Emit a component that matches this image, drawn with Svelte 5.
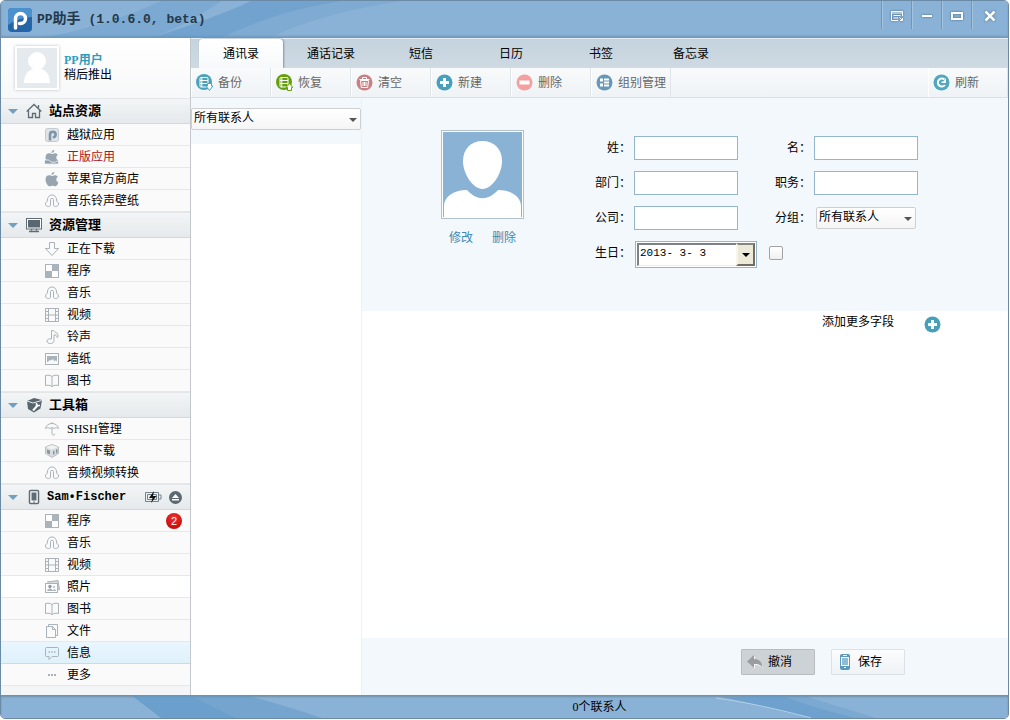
<script lang="ts">
  type Item = { icon: string; label: string; badge?: number; red?: boolean };
  type Group = { icon: string; title: string; device?: boolean; items: Item[] };

  const groups: Group[] = [
    {
      icon: 'home',
      title: '站点资源',
      items: [
        { icon: 'pp', label: '越狱应用' },
        { icon: 'appleHand', label: '正版应用', red: true },
        { icon: 'apple', label: '苹果官方商店' },
        { icon: 'music', label: '音乐铃声壁纸' }
      ]
    },
    {
      icon: 'monitor',
      title: '资源管理',
      items: [
        { icon: 'download', label: '正在下载' },
        { icon: 'apps', label: '程序' },
        { icon: 'music', label: '音乐' },
        { icon: 'video', label: '视频' },
        { icon: 'note', label: '铃声' },
        { icon: 'wallpaper', label: '墙纸' },
        { icon: 'book', label: '图书' }
      ]
    },
    {
      icon: 'tools',
      title: '工具箱',
      items: [
        { icon: 'umbrella', label: 'SHSH管理' },
        { icon: 'firmware', label: '固件下载' },
        { icon: 'music', label: '音频视频转换' }
      ]
    },
    {
      icon: 'phone',
      title: 'Sam•Fischer',
      device: true,
      items: [
        { icon: 'apps', label: '程序', badge: 2 },
        { icon: 'music', label: '音乐' },
        { icon: 'video', label: '视频' },
        { icon: 'photo', label: '照片' },
        { icon: 'book', label: '图书' },
        { icon: 'files', label: '文件' },
        { icon: 'message', label: '信息' },
        { icon: 'more', label: '更多' }
      ]
    }
  ];

  const tabs = ['通讯录', '通话记录', '短信', '日历', '书签', '备忘录'];

  const tools = [
    { icon: 'backup', label: '备份' },
    { icon: 'restore', label: '恢复' },
    { icon: 'clear', label: '清空' },
    { icon: 'add', label: '新建' },
    { icon: 'remove', label: '删除' },
    { icon: 'groups', label: '组别管理' }
  ];

  let activeTab = $state('通讯录');
  let activeItem = $state('信息');
  let contactGroup = $state('所有联系人');
  let birthday = $state('2013- 3- 3');
  let useBirthday = $state(false);
  let closed = $state<Record<string, boolean>>({});

  function toggle(title: string) {
    closed[title] = !closed[title];
  }

  function select(e: MouseEvent, label: string) {
    e.preventDefault();
    activeItem = label;
  }
</script>

{#snippet sideIcon(name: string)}
  <svg class="side-icon" viewBox="0 0 16 16" fill="none" stroke="#a9b3b9" aria-hidden="true">
    {#if name === 'pp'}
      <rect x="1.5" y="1.5" width="13" height="13" rx="2" fill="#dfe4e8" stroke="#c3cbd1" />
      <path d="M6 13.5V7.5a2.8 2.8 0 1 1 2.8 2.8" stroke="#7e95a8" stroke-width="2.6" />
    {:else if name === 'apple' || name === 'appleHand'}
      <path
        d="M10.3.8c.1 1.700-1.100 3.100-2.800 3.200C7.400 2.400 8.700 1.100 10.300.8zM8 5c.8 0 1.600-.8 3-.8 1.200 0 2.200.6 2.900 1.500-2.400 1.500-2 4.700.5 5.700-.7 1.900-1.900 3.900-3.300 3.900-1 0-1.500-.6-2.700-.6s-1.800.6-2.700.6C3.800 15.300 1.500 11.500 1.500 8.500c0-2.700 1.700-4.200 3.500-4.200C6.300 4.300 7.200 5 8 5z"
        fill="#97a5b1"
        stroke="none"
      />
      {#if name === 'appleHand'}
        <path d="M.5 11h4l3 2.200h4l3-2V15H.5z" fill="#8e9eab" stroke="#f9f9f9" stroke-width=".8" />
      {/if}
    {:else if name === 'music'}
      <path d="M6.500 6.500v5.500c0 1-.9 1.500-2 1.500-1.700 0-3-.9-3-2.500 0-1.200.8-2.200 1.800-2.600C3.300 4.500 5 2 8 2s4.700 2.500 4.700 6.400c1 .4 1.800 1.400 1.800 2.600 0 1.600-1.300 2.500-3 2.500-1.100 0-2-.5-2-1.500V6.500c0-1.500-3-1.500-3 0z" />
    {:else if name === 'download'}
      <path d="M5.500 1.500h5v6h4L8 14.500 1.500 7.500h4z" stroke-linejoin="round" />
    {:else if name === 'apps'}
      <rect x="1.500" y="1.500" width="13" height="13" fill="#fff" />
      <path d="M8 2h6v6H8zM2 8h6v6H2z" fill="#a9b3b9" stroke="none" />
    {:else if name === 'video'}
      <path d="M1.500 1.500h13v13h-13zM4.500 1.500v13M11.500 1.500v13M4.500 8h7M1.500 4.500h3M1.500 8h3M1.500 11.500h3M11.500 4.500h3M11.500 8h3M11.500 11.500h3" />
    {:else if name === 'note'}
      <path d="M7.500 10V1.500h2c.3 2 4.500 1.500 4.500 5 0 1.200-.6 2-1 2 .2-2-1.500-2.500-3-2.700v5.700c0 2-1.600 3-3.500 3s-3.500-.8-3.500-2.300C3 10.300 5.300 9.400 7.500 10z" />
    {:else if name === 'wallpaper'}
      <rect x="1.500" y="2.500" width="13" height="11" />
      <path d="M3 5h10v6l-1-2-1.500 1.500L9 8 7 9.500 5.500 9 4 11H3z" fill="#a9b3b9" stroke="none" />
    {:else if name === 'book'}
      <path d="M8 3.500C6.500 2 3.500 2 1.500 2.500v10c2-.5 5-.3 6.500 1 1.500-1.300 4.500-1.500 6.500-1v-10C12.500 2 9.500 2 8 3.500zM8 3.500v10" />
    {:else if name === 'umbrella'}
      <path d="M1.500 7.500C2 4.500 4.500 2.500 8 2.500s6 2 6.500 5c-1.500-1-3-1-4.300 0C9 6.500 7 6.500 5.800 7.500c-1.300-1-2.800-1-4.300 0zM8 1v1.500M8 7v5.500c0 2.200 2.700 2.200 2.700.2" />
    {:else if name === 'firmware'}
      <path d="M1.500 4L8 1.500 14.500 4v6.500L8 14.500 1.500 10.500z" fill="#dadddf" stroke="#b9bfc4" />
      <path d="M2 4.200L8 6.500l6-2.300L8 2z" fill="#f1f2f2" stroke="none" />
      <path d="M3 6.500l3 1v4L3 10zM9 8l1.500-.5v3.500L9 12zM12 6.500l1.500-.5v4L12 10.500z" fill="#8b969e" stroke="none" />
    {:else if name === 'photo'}
      <path d="M3 3l11-1.500 1.500 9L13 11" fill="#d5dadd" />
      <rect x="1.500" y="4.500" width="12" height="9" fill="#fff" />
      <circle cx="6" cy="7.500" r="1.700" fill="#8f9ba3" stroke="none" />
      <circle cx="10" cy="8" r="1.200" fill="#c3cacf" stroke="none" />
      <path d="M3 12c.3-3.500 5.700-3.500 6 0zM9 12c0-2.500 3-2.500 3 0z" fill="#a9b3b9" stroke="none" />
    {:else if name === 'files'}
      <path d="M4.500 3.500v-2h9v11h-2M2.500 3.500h6l3 3v8h-9zM8.500 3.500v3h3" />
    {:else if name === 'message'}
      <path d="M2.500 2.500h11q1 0 1 1v7q0 1-1 1H8L5 14.500v-3H2.500q-1 0-1-1v-7q0-1 1-1z" />
      <path d="M4.500 7h1.500M7.200 7h1.500M10 7h1.500" stroke-width="1.500" />
    {:else}
      <path d="M4 8h2M7 8h2M10 8h2" stroke-width="2" />
    {/if}
  </svg>
{/snippet}

{#snippet groupIcon(name: string)}
  <svg class="group-icon" viewBox="0 0 16 16" fill="none" stroke="#5f6c75" aria-hidden="true">
    {#if name === 'home'}
      <path d="M.7 8.500L8 1.500l7.300 7M2.500 7.500v7h4v-4h3v4h4v-7M12.500 2v3" stroke-width="1.300" />
    {:else if name === 'monitor'}
      <rect x=".5" y="1.500" width="15" height="10.500" fill="#fff" />
      <rect x="2" y="3" width="12" height="7.500" fill="#5a6770" stroke="none" />
      <path d="M5.500 12v1.500M10.500 12v1.500M3 14.500h10" stroke-width="1.500" />
    {:else if name === 'tools'}
      <path d="M1 4l7-3 8 2-1.500 8.500-6.500 4-6-3.500z" fill="#59656e" stroke="none" />
      <path d="M1 4l6 2 8.500-2.500" stroke="#e8ecee" />
      <path d="M7 13.500l5-5.500" stroke="#fff" stroke-width="2" />
      <path d="M10.500 6v2.500h3.500" stroke="#fff" stroke-width="1.500" />
    {:else}
      <rect x="3.500" y="1.500" width="9" height="13" rx="1" fill="#fff" stroke-width="1.500" />
      <rect x="5.500" y="3.500" width="5" height="8" fill="#5f6c75" stroke="none" />
      <path d="M7 13h2" />
    {/if}
  </svg>
{/snippet}

{#snippet toolIcon(name: string)}
  <svg class="tool-icon" viewBox="0 0 17 17" fill="none" stroke="#fff" aria-hidden="true">
    {#if name === 'backup' || name === 'restore'}
      {@const color = name === 'backup' ? '#4ba3bb' : '#64a00c'}
      <circle cx="8" cy="8" r="8" fill={color} stroke="none" />
      <rect x="4" y="3.500" width="8" height="9.500" rx="1" />
      <path d="M4 6.500h8M4 9.500h8M5.800 3.500v9.500" />
      {#if name === 'backup'}
        <path d="M11.500 9.500h4v2.500h1.300L13.500 16.500 10 12h1.500z" fill="#fff" stroke={color} />
      {:else}
        <path d="M11.500 16.500h4v-3h1.300L13.500 9.500 10 13.500h1.500z" fill="#fff" stroke={color} />
      {/if}
    {:else if name === 'clear'}
      <circle cx="8.500" cy="8.500" r="8" fill="#cb7f82" stroke="none" />
      <path d="M4.500 6.500h8l-.8 7H5.300zM3.500 5.500h10M6.500 5V3.500h4V5M7 8v4M8.500 8v4M10 8v4" />
    {:else if name === 'add'}
      <circle cx="8.500" cy="8.500" r="8" fill="#489fb9" stroke="none" />
      <path d="M8.500 4v9M4 8.500h9" stroke-width="3" />
    {:else if name === 'remove'}
      <circle cx="8.500" cy="8.500" r="8" fill="#f4a09f" stroke="none" />
      <path d="M3.500 8.500h10" stroke-width="4" />
    {:else if name === 'groups'}
      <circle cx="8.500" cy="8.500" r="8" fill="#6798b8" stroke="none" />
      <path d="M4 6h3M4 11h3" stroke-width="3" />
      <path d="M8 5.500h5M8 8.500h5M8 11.500h5" stroke-width="2" />
    {:else}
      <circle cx="8.500" cy="8.500" r="8" fill="#4fa8c0" stroke="none" />
      <path d="M12 11a4 4 0 1 1-.5-5.500" stroke-width="2" />
      <path d="M13 4v5H8.500V7.500h2z" fill="#fff" stroke="none" />
    {/if}
  </svg>
{/snippet}

{#snippet field(id: string, label: string)}
  <label for={id}>{label}：</label>
  <input {id} class="text-input" type="text" />
{/snippet}

<div class="window">
  <header class="titlebar">
    <svg class="streaks" width="420" height="37" viewBox="0 0 420 37" aria-hidden="true">
      <path d="M40 37C90 28 130 14 160 0h60C200 14 180 26 150 37z" fill="#5f98c8" opacity=".35" />
      <path d="M150 37C190 24 225 12 250 0h90C290 8 250 22 220 37z" fill="#5f98c8" opacity=".55" />
      <path d="M220 37C250 22 290 8 340 0h60C350 8 300 20 270 37z" fill="#5f98c8" opacity=".25" />
    </svg>
    <svg class="logo" viewBox="0 0 24 24" aria-hidden="true">
      <rect width="24" height="24" rx="4" fill="#2465a8" />
      <path d="M0 4q0-4 4-4h16q4 0 4 4v5Q12 9 0 17z" fill="#4b91cd" />
      <path d="M7.500 20V10.500a5 5 0 1 1 5 5h-1" fill="none" stroke="#fff" stroke-width="3.500" stroke-linecap="round" />
    </svg>
    <h1>PP<span>助手</span> (1.0.6.0, beta)</h1>
    <div class="window-buttons">
      <button aria-label="菜单">
        <svg viewBox="0 0 16 14"><path d="M9 11.500H2.500v-9h11V7M2 4h12M4.500 6.500h7M4.500 9h4.500M10.500 8.500l3 3M13.500 9v2.500H11" /></svg>
      </button>
      <button aria-label="最小化">
        <svg viewBox="0 0 16 14"><path d="M3 7h10" stroke-width="2" /></svg>
      </button>
      <button aria-label="最大化">
        <svg viewBox="0 0 16 14"><path d="M3 4h10v6H3z" stroke-width="2" /></svg>
      </button>
      <button class="close" aria-label="关闭">
        <svg viewBox="0 0 16 14"><path d="M3.500 2.500l9 9M12.500 2.500l-9 9" stroke-width="2.500" /></svg>
      </button>
    </div>
  </header>

  <div class="body">
    <aside>
      <div class="profile">
        <svg class="user-pic" viewBox="0 0 40 40" aria-hidden="true">
          <rect width="40" height="40" fill="#e5eaee" />
          <circle cx="20" cy="13" r="9" fill="#fff" />
          <path d="M7 35c0-8 4-13 9-14h8c5 1 9 6 9 14z" fill="#fff" />
        </svg>
        <div>
          <strong>PP用户</strong>
          <span>稍后推出</span>
        </div>
      </div>

      <nav>
        {#each groups as group}
          <div class="group-head">
            <button class="group-toggle" onclick={() => toggle(group.title)}>
              <span class="triangle"></span>
              {@render groupIcon(group.icon)}
              <span class="group-title" class:device={group.device}>{group.title}</span>
            </button>
            {#if group.device}
              <svg class="battery" viewBox="0 0 17 12" fill="none" stroke="#76828a" aria-hidden="true">
                <path d="M.5 1.500h13v9H.5zM14 4h2v4h-2" />
                <path d="M2.500 3.500h9v5h-9z" />
                <path d="M9 0L4 7h3.500L6 12l5.500-7H8z" fill="#111" stroke="none" />
              </svg>
              <button class="eject" aria-label="弹出">
                <svg viewBox="0 0 13 13">
                  <circle cx="6.500" cy="6.500" r="6.500" fill="#5c6971" />
                  <path d="M6.500 3l3.500 4H3zM3 8h7v1.500H3z" fill="#fff" />
                </svg>
              </button>
            {/if}
          </div>
          {#if !closed[group.title]}
            <ul>
              {#each group.items as item}
                <li>
                  <a
                    href="#top"
                    class:active={item.label === activeItem}
                    class:hovered={item.icon === 'photo'}
                    class:red={item.red}
                    onclick={(e) => select(e, item.label)}
                  >
                    {@render sideIcon(item.icon)}
                    <span>{item.label}</span>
                    {#if item.badge}<b class="badge">{item.badge}</b>{/if}
                  </a>
                </li>
              {/each}
            </ul>
          {/if}
        {/each}
      </nav>
    </aside>

    <main>
      <div class="tabs" role="tablist">
        {#each tabs as tab}
          <button role="tab" aria-selected={tab === activeTab} class:active={tab === activeTab} onclick={() => (activeTab = tab)}>
            {tab}
          </button>
        {/each}
      </div>

      <div class="toolbar">
        {#each tools as tool}
          <button>{@render toolIcon(tool.icon)}{tool.label}</button>
        {/each}
        <button class="refresh">{@render toolIcon('refresh')}刷新</button>
      </div>

      <div class="content">
        <section class="contacts">
          <div class="select">
            <select aria-label="联系人分组">
              <option>所有联系人</option>
            </select>
          </div>
          <div class="contact-list"></div>
        </section>

        <section class="detail">
          <div class="card">
            <div class="avatar-box">
              <svg class="avatar" viewBox="0 0 79 85" aria-hidden="true">
                <rect width="79" height="85" fill="#8ab2d5" />
                <path d="M39.500 9C51 9 59 17 59 29c0 13-10 28-19.500 28S20 42 20 29C20 17 28 9 39.500 9z" fill="#fff" />
                <path d="M1 85V74c0-9 9-16 23-16 10 11 21 11 31 0 14 0 23 7 23 16v11z" fill="#fff" />
              </svg>
              <div class="avatar-links">
                <a href="#edit">修改</a>
                <a href="#delete">删除</a>
              </div>
            </div>

            <form class="fields">
              {@render field('last-name', '姓')}
              {@render field('first-name', '名')}
              {@render field('department', '部门')}
              {@render field('job', '职务')}
              {@render field('company', '公司')}
              <label for="group">分组：</label>
              <div class="select group-select">
                <select id="group" bind:value={contactGroup}>
                  <option>所有联系人</option>
                </select>
              </div>
              <label for="birthday">生日：</label>
              <div class="birthday">
                <div class="date-box">
                  <input id="birthday" type="text" bind:value={birthday} />
                  <button type="button" aria-label="选择日期"><span></span></button>
                </div>
                <input type="checkbox" aria-label="生日" bind:checked={useBirthday} />
              </div>
            </form>
          </div>

          <div class="more-fields">
            <span>添加更多字段</span>
            <button aria-label="添加更多字段">{@render toolIcon('add')}</button>
          </div>

          <div class="actions">
            <button class="undo">
              <svg viewBox="0 0 16 16" aria-hidden="true">
                <path d="M8 15V11c4 0 6 1 8 4 0-6-3-9-8-9V2L1 8.500z" fill="#f4f5f6" />
                <path d="M7 14v-4c4 0 7 .5 8.500 4C15.500 8 12 5 7 5V1L0 7.500z" fill="#999da0" />
              </svg>
              撤消
            </button>
            <button>
              <svg viewBox="0 0 16 16" aria-hidden="true">
                <rect x="3" y="0" width="10" height="16" rx="2" fill="#5b98bf" />
                <rect x="4.500" y="3.500" width="7" height="8" fill="#8cbcd8" stroke="#fff" />
                <path d="M6 1.500h4M7 13.500h2" stroke="#fff" />
              </svg>
              保存
            </button>
          </div>
        </section>
      </div>
    </main>
  </div>

  <footer>
    <svg class="streaks" width="900" height="23" viewBox="0 0 900 23" aria-hidden="true">
      <path d="M130 0h60c15 8 30 16 45 23h-75z" fill="#5f98c8" opacity=".7" />
      <path d="M190 0h55c28 8 50 14 75 23h-85C220 16 205 8 190 0z" fill="#5f98c8" opacity=".5" />
      <path d="M780 0h20c20 6 45 14 75 23h-20C825 16 800 8 780 0z" fill="#5f98c8" opacity=".35" />
      <path d="M720 2c20 0 40-2 60-2 20 8 45 16 75 23h-45C780 16 750 8 720 2z" fill="#5f98c8" opacity=".65" />
      <path d="M715 3c30 4 65 12 95 20" fill="none" stroke="#b3d0e8" />
    </svg>
    <span>0个联系人</span>
  </footer>
</div>

<style>
  :global(body) {
    margin: 0;
    background: #fff;
    color: #000;
    font: 12px/16px 'Liberation Serif', 'Noto Sans CJK SC', serif;
  }

  button,
  input,
  select {
    box-sizing: border-box;
    margin: 0;
    color: inherit;
    font: inherit;
  }

  button {
    padding: 0;
    border: 0;
    background: none;
    cursor: pointer;
  }

  a {
    text-decoration: none;
  }

  .window {
    box-sizing: border-box;
    min-height: calc(100vh - 1px);
    margin: 0 1px 1px 0;
    border: 1px solid #6a8aa5;
    border-radius: 5px;
    overflow: hidden;
    display: flex;
    flex-direction: column;
  }

  .titlebar,
  footer {
    position: relative;
    display: flex;
    align-items: center;
    background: #8ab2d6;
  }

  .titlebar {
    height: 37px;
    padding-left: 7px;
    gap: 5px;
    box-shadow: inset 0 -2px 2px #7499b9;
  }

  .streaks {
    position: absolute;
    left: 0;
    top: 0;
  }

  .logo {
    position: relative;
    width: 24px;
    height: 24px;
  }

  h1 {
    position: relative;
    flex: 1;
    margin: 0;
    font: bold 13px/20px 'Liberation Mono', 'Noto Sans CJK SC', monospace;
    color: #24384a;
  }

  h1 span {
    font-size: 14px;
  }

  .window-buttons {
    align-self: flex-start;
    display: flex;
  }

  .window-buttons button {
    width: 30px;
    height: 28px;
    border-left: 1px solid #7097b9;
    box-shadow: inset 1px 0 #a3c4df;
  }

  .window-buttons .close {
    width: 37px;
  }

  .window-buttons svg {
    width: 16px;
    height: 14px;
    vertical-align: middle;
    fill: none;
    stroke: #fff;
    filter: drop-shadow(0 0 1px #42678a);
  }

  .body {
    flex: 1;
    display: flex;
  }

  aside {
    width: 189px;
    flex: none;
    border-right: 1px solid #c3c8cc;
    background: #f3f5f7;
  }

  .profile {
    box-sizing: border-box;
    height: 60px;
    padding: 8px 0 0 14px;
    display: flex;
    gap: 5px;
    background: linear-gradient(#fff, #f7f8f9);
  }

  .user-pic {
    width: 40px;
    height: 40px;
    padding: 1px;
    border: 1px solid #fff;
    box-shadow: 0 0 3px #bbc0c4;
    background: #fff;
  }

  .profile div {
    padding-top: 7px;
  }

  .profile strong,
  .profile span {
    display: block;
    line-height: 15px;
  }

  .profile strong {
    color: #2d9dbd;
  }

  .group-head {
    box-sizing: border-box;
    height: 26px;
    padding-right: 8px;
    border-top: 1px solid #e3e6e8;
    border-bottom: 1px solid #d4d9dc;
    display: flex;
    align-items: center;
    background: linear-gradient(#f3f5f6, #e5e9eb);
  }

  .group-toggle {
    flex: 1;
    padding-left: 7px;
    display: flex;
    align-items: center;
    text-align: left;
  }

  .triangle {
    border: 5px solid transparent;
    border-top-color: #6fa0c4;
    border-bottom: 0;
  }

  .group-icon {
    width: 16px;
    height: 16px;
    margin: 0 7px 0 8px;
  }

  .group-title {
    font-size: 13px;
    font-weight: bold;
  }

  .group-title.device {
    margin-left: -2px;
    font-family: 'Liberation Mono', monospace;
    font-size: 12px;
  }

  .battery {
    width: 17px;
    height: 12px;
  }

  .eject {
    height: 13px;
    margin-left: 7px;
  }

  .eject svg {
    display: block;
    width: 13px;
    height: 13px;
  }

  ul {
    margin: 0;
    padding: 0;
    list-style: none;
  }

  li a {
    box-sizing: border-box;
    height: 22px;
    padding: 0 8px 0 43px;
    border-bottom: 1px solid #e6e8e9;
    display: flex;
    align-items: center;
    gap: 7px;
    color: #000;
    background: #fafafa;
  }

  li a.red {
    color: #b01218;
  }

  li a.hovered {
    background: #fff;
  }

  li a.active {
    border-color: #c7dce8;
    background: linear-gradient(#e9f6fe, #dff1fb);
  }

  .side-icon {
    width: 16px;
    height: 16px;
  }

  .badge {
    width: 16px;
    height: 16px;
    margin-left: auto;
    border-radius: 50%;
    background: radial-gradient(circle at 50% 30%, #ee3030, #bd0000);
    color: #fff;
    font: 11px/16px 'Liberation Sans', sans-serif;
    text-align: center;
  }

  main {
    flex: 1;
    min-width: 0;
    display: flex;
    flex-direction: column;
  }

  .tabs {
    box-sizing: border-box;
    height: 30px;
    padding-left: 8px;
    display: flex;
    gap: 6px;
    border-top: 1px solid #e4edf3;
    background: linear-gradient(#c4d3de, #cfdae2);
  }

  .tabs button {
    width: 84px;
  }

  .tabs .active {
    border-radius: 4px 4px 0 0;
    background: linear-gradient(#fff, #f6f9fb);
    box-shadow: 1px 0 2px #8194a3;
  }

  .toolbar {
    box-sizing: border-box;
    height: 30px;
    border-bottom: 1px solid #dae1e5;
    display: flex;
    background: linear-gradient(#f8fafb, #eff3f6);
  }

  .toolbar button {
    width: 80px;
    padding-left: 5px;
    border-right: 1px solid #dfe4e8;
    box-shadow: inset 1px 0 #fff;
    display: flex;
    align-items: center;
    gap: 5px;
    color: #666;
    white-space: nowrap;
  }

  .toolbar .refresh {
    margin-left: auto;
  }

  .tool-icon {
    display: block;
    flex: none;
    width: 17px;
    height: 17px;
  }

  .content {
    flex: 1;
    display: flex;
    background: #f2f8fb;
  }

  .contacts {
    width: 170px;
    padding-top: 10px;
    border-right: 1px solid #eef1f3;
    display: flex;
    flex-direction: column;
    gap: 14px;
  }

  .contact-list {
    flex: 1;
    background: #fff;
  }

  .select {
    position: relative;
  }

  .select select {
    width: 100%;
    height: 22px;
    padding: 0 16px 2px 2px;
    border: 1px solid #cfcfcf;
    border-radius: 2px;
    background: linear-gradient(#fff, #f5f5f5);
    appearance: none;
    display: block;
  }

  .select::after {
    content: '';
    position: absolute;
    right: 4px;
    top: 10px;
    border: 4px solid transparent;
    border-top-color: #555;
    border-bottom: 0;
    pointer-events: none;
  }

  .detail {
    flex: 1;
    min-width: 0;
    display: flex;
    flex-direction: column;
  }

  .card {
    box-sizing: border-box;
    min-height: 213px;
    padding: 32px 16px 0 79px;
    display: flex;
    gap: 60px;
  }

  .avatar {
    display: block;
    width: 79px;
    height: 85px;
    padding: 1px;
    border: 1px solid #b2c1cd;
    background: #fff;
  }

  .avatar-links {
    padding-top: 11px;
    display: flex;
    justify-content: center;
    gap: 19px;
  }

  .avatar-links a {
    color: #4089b5;
  }

  .fields {
    padding-top: 6px;
    display: grid;
    grid-template-columns: 47px 104px 70px 104px;
    grid-auto-rows: 24px;
    align-content: start;
    align-items: center;
    gap: 11px 3px;
  }

  .fields label {
    text-align: right;
  }

  .text-input {
    width: 104px;
    height: 24px;
    border: 1px solid #94b6cd;
    background: #fff;
  }

  .group-select {
    width: 100px;
    margin-left: 2px;
  }

  .birthday {
    grid-column: span 3;
    padding: 3px 0 0 1px;
    display: flex;
    align-items: center;
    gap: 12px;
  }

  .date-box {
    box-sizing: border-box;
    width: 122px;
    height: 27px;
    padding: 1px;
    border: 1px solid #94b6cd;
    background: #fff;
    display: flex;
  }

  .date-box input {
    flex: 1;
    min-width: 0;
    padding: 0 1px 4px;
    border: 2px solid #7c8287;
    border-width: 2px 0 1px 2px;
    border-bottom-color: #f0eee4;
    background: #fff;
    font-family: 'Liberation Mono', monospace;
    font-size: 11px;
  }

  .date-box button {
    width: 19px;
    border: 2px solid #716f64;
    border-color: #85877f #716f64 #716f64 #f8f6ec;
    background: #ece9d8;
    display: grid;
    place-items: center;
  }

  .date-box span {
    border: 4px solid transparent;
    border-top-color: #000;
    border-bottom: 0;
  }

  .birthday input[type='checkbox'] {
    width: 14px;
    height: 14px;
    margin-bottom: 4px;
    border: 1px solid #a3a3a3;
    border-radius: 2px;
    background: linear-gradient(#fff, #f0f0f0);
    appearance: none;
  }

  .birthday input[type='checkbox']:checked {
    background: #8ab2d5;
  }

  .more-fields {
    flex: 1;
    padding: 3px 67px 0 0;
    display: flex;
    justify-content: flex-end;
    align-items: flex-start;
    gap: 30px;
    background: #fff;
  }

  .more-fields button {
    padding-top: 2px;
  }

  .actions {
    box-sizing: border-box;
    height: 57px;
    padding: 11px 103px 0 0;
    display: flex;
    justify-content: flex-end;
    gap: 16px;
  }

  .actions button {
    width: 74px;
    height: 26px;
    padding-left: 5px;
    border: 1px solid #dbe2e7;
    border-radius: 1px;
    background: linear-gradient(#fbfcfd, #eff3f6);
    display: flex;
    align-items: center;
    gap: 5px;
  }

  .actions .undo {
    border-color: #b9bdc0;
    background: #cdd2d6;
  }

  .actions svg {
    width: 16px;
    height: 16px;
  }

  footer {
    box-sizing: border-box;
    height: 23px;
    padding-left: 190px;
    justify-content: center;
    box-shadow: inset 0 2px 2px #7191a9;
  }

  footer span {
    position: relative;
  }
</style>
